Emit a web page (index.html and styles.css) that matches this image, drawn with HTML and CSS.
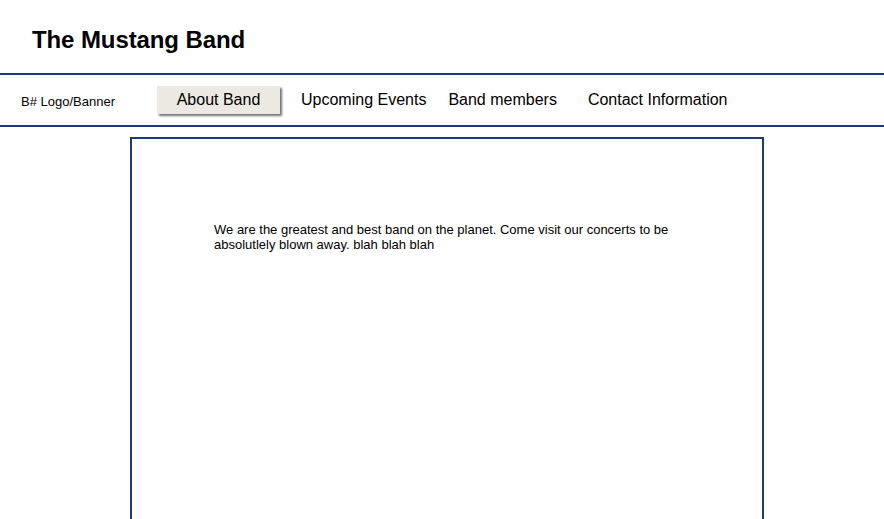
FILE: index.html
```html
<!DOCTYPE html>
<html>
<head>
<meta charset="utf-8">
<link rel="stylesheet" href="styles.css">
</head>
<body>
<header class="header">
  <h1 class="title">The Mustang Band</h1>
</header>
<nav class="nav">
  <div class="logo">B# Logo/Banner</div>
  <a class="nav-btn">About Band</a>
  <a class="nav-link link-events">Upcoming Events</a>
  <a class="nav-link link-members">Band members</a>
  <a class="nav-link link-contact">Contact Information</a>
</nav>
<main class="content">
  <p class="intro">We are the greatest and best band on the planet. Come visit our concerts to be absolutlely blown away. blah blah blah</p>
</main>
</body>
</html>
```

FILE: styles.css
```css
html, body {
  margin: 0;
  padding: 0;
  background: #ffffff;
  overflow: hidden;
}
body {
  font-family: "Liberation Sans", Arial, sans-serif;
  color: #000;
}
.header {
  height: 73px;
  box-sizing: border-box;
  padding: 26px 0 0 32px;
}
.title {
  margin: 0;
  font-size: 24px;
  line-height: 28px;
  font-weight: bold;
  letter-spacing: -0.1px;
}
.nav {
  display: flex;
  align-items: center;
  height: 50px;
  border-top: 2px solid #1f357f;
  border-bottom: 2px solid #1f357f;
  padding-left: 21px;
}
.logo {
  font-size: 13px;
  line-height: 16px;
  margin-top: 3px;
  width: 136px;
}
.nav-btn {
  display: block;
  box-sizing: border-box;
  width: 123px;
  height: 28px;
  margin-top: -1px;
  background: #ece9e2;
  font-size: 16px;
  line-height: 28px;
  text-align: center;
  box-shadow: 2px 2px 2px rgba(0,0,0,0.55);
}
.nav-link {
  display: block;
  font-size: 16px;
  line-height: 20px;
  margin-top: 0;
}
.link-events { margin-left: 21px; }
.link-members { margin-left: 22px; }
.link-contact { margin-left: 31px; }
.content {
  box-sizing: border-box;
  margin: 10px 0 0 130px;
  width: 634px;
  height: 420px;
  border: 2px solid #1f357f;
  padding: 83px 0 0 82px;
}
.intro {
  margin: 0;
  width: 490px;
  font-size: 13px;
  line-height: 15px;
}
```
